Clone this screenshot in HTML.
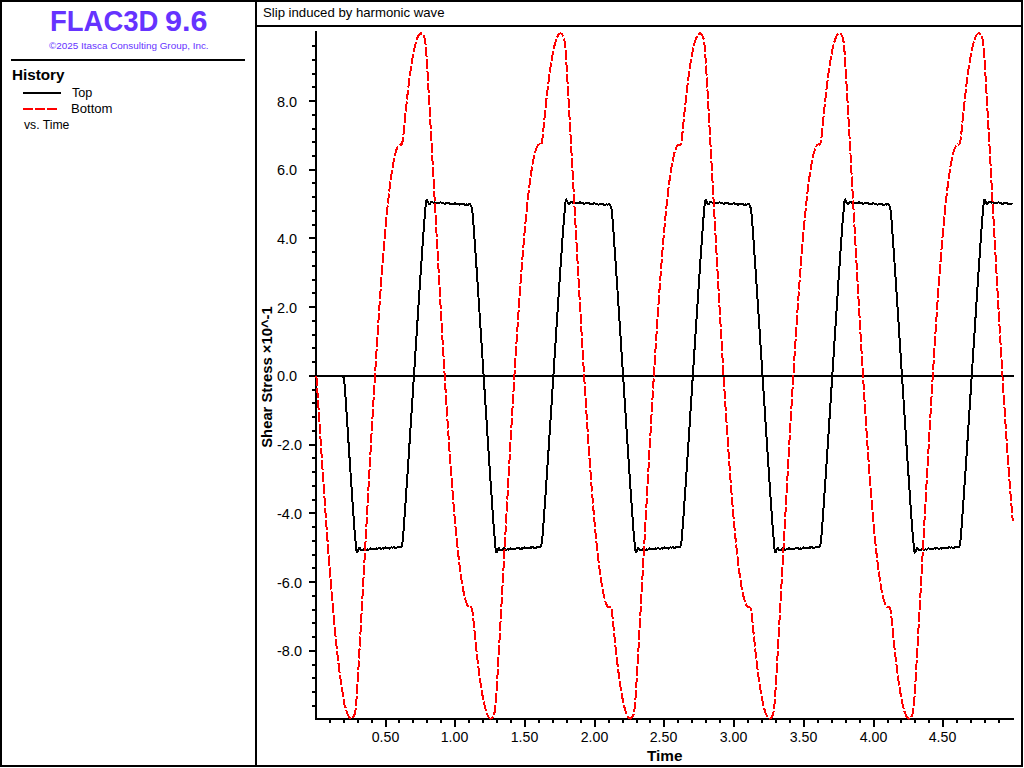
<!DOCTYPE html>
<html><head><meta charset="utf-8"><style>
html,body{margin:0;padding:0;background:#fff;width:1024px;height:768px;overflow:hidden}
svg{display:block;font-family:"Liberation Sans",sans-serif}
</style></head><body>
<svg width="1024" height="768" viewBox="0 0 1024 768">
<rect x="0" y="0" width="1024" height="768" fill="#fff"/>
<rect x="0" y="0" width="1023" height="2" fill="#000"/>
<rect x="0" y="765" width="1023" height="2" fill="#000"/>
<rect x="0" y="0" width="2" height="767" fill="#000"/>
<rect x="1021" y="0" width="2" height="767" fill="#000"/>
<rect x="255" y="0" width="2" height="767" fill="#000"/>
<rect x="257" y="25" width="764" height="2" fill="#000"/>
<rect x="11" y="59" width="234" height="2" fill="#000"/>
<rect x="23" y="92" width="38" height="2" fill="#000"/>
<rect x="23" y="108" width="10" height="2" fill="#f00"/>
<rect x="35" y="108" width="10" height="2" fill="#f00"/>
<rect x="47" y="108" width="10" height="2" fill="#f00"/>
<rect x="315" y="31" width="2" height="689" fill="#000"/>
<rect x="315" y="718" width="699" height="2" fill="#000"/>
<rect x="309" y="375" width="705" height="2" fill="#000"/>
<rect x="312" y="705" width="3" height="2" fill="#000"/>
<rect x="312" y="691" width="3" height="2" fill="#000"/>
<rect x="312" y="677" width="3" height="2" fill="#000"/>
<rect x="312" y="664" width="3" height="2" fill="#000"/>
<rect x="309" y="650" width="6" height="2" fill="#000"/>
<rect x="312" y="636" width="3" height="2" fill="#000"/>
<rect x="312" y="622" width="3" height="2" fill="#000"/>
<rect x="312" y="609" width="3" height="2" fill="#000"/>
<rect x="312" y="595" width="3" height="2" fill="#000"/>
<rect x="309" y="581" width="6" height="2" fill="#000"/>
<rect x="312" y="567" width="3" height="2" fill="#000"/>
<rect x="312" y="554" width="3" height="2" fill="#000"/>
<rect x="312" y="540" width="3" height="2" fill="#000"/>
<rect x="312" y="526" width="3" height="2" fill="#000"/>
<rect x="309" y="512" width="6" height="2" fill="#000"/>
<rect x="312" y="499" width="3" height="2" fill="#000"/>
<rect x="312" y="485" width="3" height="2" fill="#000"/>
<rect x="312" y="471" width="3" height="2" fill="#000"/>
<rect x="312" y="457" width="3" height="2" fill="#000"/>
<rect x="309" y="444" width="6" height="2" fill="#000"/>
<rect x="312" y="430" width="3" height="2" fill="#000"/>
<rect x="312" y="416" width="3" height="2" fill="#000"/>
<rect x="312" y="402" width="3" height="2" fill="#000"/>
<rect x="312" y="389" width="3" height="2" fill="#000"/>
<rect x="312" y="361" width="3" height="2" fill="#000"/>
<rect x="312" y="347" width="3" height="2" fill="#000"/>
<rect x="312" y="334" width="3" height="2" fill="#000"/>
<rect x="312" y="320" width="3" height="2" fill="#000"/>
<rect x="309" y="306" width="6" height="2" fill="#000"/>
<rect x="312" y="292" width="3" height="2" fill="#000"/>
<rect x="312" y="279" width="3" height="2" fill="#000"/>
<rect x="312" y="265" width="3" height="2" fill="#000"/>
<rect x="312" y="251" width="3" height="2" fill="#000"/>
<rect x="309" y="237" width="6" height="2" fill="#000"/>
<rect x="312" y="224" width="3" height="2" fill="#000"/>
<rect x="312" y="210" width="3" height="2" fill="#000"/>
<rect x="312" y="196" width="3" height="2" fill="#000"/>
<rect x="312" y="182" width="3" height="2" fill="#000"/>
<rect x="309" y="169" width="6" height="2" fill="#000"/>
<rect x="312" y="155" width="3" height="2" fill="#000"/>
<rect x="312" y="141" width="3" height="2" fill="#000"/>
<rect x="312" y="128" width="3" height="2" fill="#000"/>
<rect x="312" y="114" width="3" height="2" fill="#000"/>
<rect x="309" y="100" width="6" height="2" fill="#000"/>
<rect x="312" y="86" width="3" height="2" fill="#000"/>
<rect x="312" y="73" width="3" height="2" fill="#000"/>
<rect x="312" y="59" width="3" height="2" fill="#000"/>
<rect x="312" y="45" width="3" height="2" fill="#000"/>
<rect x="329" y="720" width="2" height="3" fill="#000"/>
<rect x="343" y="720" width="2" height="3" fill="#000"/>
<rect x="357" y="720" width="2" height="3" fill="#000"/>
<rect x="371" y="720" width="2" height="3" fill="#000"/>
<rect x="385" y="720" width="2" height="7" fill="#000"/>
<rect x="398" y="720" width="2" height="3" fill="#000"/>
<rect x="412" y="720" width="2" height="3" fill="#000"/>
<rect x="426" y="720" width="2" height="3" fill="#000"/>
<rect x="440" y="720" width="2" height="3" fill="#000"/>
<rect x="454" y="720" width="2" height="7" fill="#000"/>
<rect x="468" y="720" width="2" height="3" fill="#000"/>
<rect x="482" y="720" width="2" height="3" fill="#000"/>
<rect x="496" y="720" width="2" height="3" fill="#000"/>
<rect x="510" y="720" width="2" height="3" fill="#000"/>
<rect x="524" y="720" width="2" height="7" fill="#000"/>
<rect x="538" y="720" width="2" height="3" fill="#000"/>
<rect x="552" y="720" width="2" height="3" fill="#000"/>
<rect x="566" y="720" width="2" height="3" fill="#000"/>
<rect x="580" y="720" width="2" height="3" fill="#000"/>
<rect x="594" y="720" width="2" height="7" fill="#000"/>
<rect x="608" y="720" width="2" height="3" fill="#000"/>
<rect x="622" y="720" width="2" height="3" fill="#000"/>
<rect x="636" y="720" width="2" height="3" fill="#000"/>
<rect x="649" y="720" width="2" height="3" fill="#000"/>
<rect x="663" y="720" width="2" height="7" fill="#000"/>
<rect x="677" y="720" width="2" height="3" fill="#000"/>
<rect x="691" y="720" width="2" height="3" fill="#000"/>
<rect x="705" y="720" width="2" height="3" fill="#000"/>
<rect x="719" y="720" width="2" height="3" fill="#000"/>
<rect x="733" y="720" width="2" height="7" fill="#000"/>
<rect x="747" y="720" width="2" height="3" fill="#000"/>
<rect x="761" y="720" width="2" height="3" fill="#000"/>
<rect x="775" y="720" width="2" height="3" fill="#000"/>
<rect x="789" y="720" width="2" height="3" fill="#000"/>
<rect x="803" y="720" width="2" height="7" fill="#000"/>
<rect x="817" y="720" width="2" height="3" fill="#000"/>
<rect x="831" y="720" width="2" height="3" fill="#000"/>
<rect x="845" y="720" width="2" height="3" fill="#000"/>
<rect x="859" y="720" width="2" height="3" fill="#000"/>
<rect x="873" y="720" width="2" height="7" fill="#000"/>
<rect x="887" y="720" width="2" height="3" fill="#000"/>
<rect x="900" y="720" width="2" height="3" fill="#000"/>
<rect x="914" y="720" width="2" height="3" fill="#000"/>
<rect x="928" y="720" width="2" height="3" fill="#000"/>
<rect x="942" y="720" width="2" height="7" fill="#000"/>
<rect x="956" y="720" width="2" height="3" fill="#000"/>
<rect x="970" y="720" width="2" height="3" fill="#000"/>
<rect x="984" y="720" width="2" height="3" fill="#000"/>
<rect x="998" y="720" width="2" height="3" fill="#000"/>
<defs><clipPath id="pc"><rect x="315" y="31" width="700" height="688.5"/></clipPath></defs><g clip-path="url(#pc)">
<polyline fill="none" stroke="#000" stroke-width="2" shape-rendering="crispEdges" points="316.30,375.97 316.65,375.97 317.00,375.97 317.34,375.97 317.69,375.97 318.04,375.97 318.39,375.97 318.74,375.97 319.09,375.97 319.43,375.97 319.78,375.97 320.13,375.97 320.48,375.97 320.83,375.97 321.17,375.97 321.52,375.97 321.87,375.97 322.22,375.97 322.57,375.97 322.92,375.97 323.26,375.97 323.61,375.97 323.96,375.97 324.31,375.97 324.66,375.97 325.01,375.97 325.35,375.97 325.70,375.97 326.05,375.97 326.40,375.97 326.75,375.97 327.09,375.97 327.44,375.97 327.79,375.97 328.14,375.97 328.49,375.97 328.84,375.97 329.18,375.97 329.53,375.97 329.88,375.97 330.23,375.97 330.58,375.97 330.92,375.97 331.27,375.97 331.62,375.97 331.97,375.97 332.32,375.97 332.67,375.97 333.01,375.97 333.36,375.97 333.71,375.97 334.06,375.97 334.41,375.97 334.75,375.97 335.10,375.97 335.45,375.97 335.80,375.97 336.15,375.97 336.50,375.97 336.84,375.97 337.19,375.97 337.54,375.97 337.89,375.97 338.24,375.97 338.59,375.97 338.93,375.97 339.28,375.97 339.63,375.97 339.98,375.97 340.33,375.97 340.67,375.97 341.02,375.97 341.37,375.97 341.72,375.98 342.07,375.99 342.42,376.05 342.76,376.20 343.11,376.57 343.46,377.34 343.81,378.71 344.16,380.88 344.50,383.93 344.85,387.81 345.20,392.33 345.55,397.28 345.90,402.47 346.25,407.77 346.59,413.11 346.94,418.45 347.29,423.79 347.64,429.12 347.99,434.44 348.34,439.74 348.68,445.03 349.03,450.30 349.38,455.55 349.73,460.78 350.08,465.99 350.42,471.18 350.77,476.35 351.12,481.49 351.47,486.60 351.82,491.69 352.17,496.75 352.51,501.78 352.86,506.78 353.21,511.74 353.56,516.66 353.91,521.53 354.25,526.30 354.60,530.89 354.95,535.17 355.30,538.96 355.65,542.08 356.00,547.31 356.34,550.11 356.69,551.71 357.04,552.27 357.39,552.04 357.74,551.32 358.08,550.38 358.43,549.44 358.78,548.69 359.13,548.24 359.48,548.10 359.83,548.27 360.17,549.20 360.52,549.76 360.87,550.16 361.22,550.36 361.57,550.43 361.92,550.40 362.26,550.33 362.61,550.18 362.96,549.93 363.31,549.55 363.66,549.08 364.00,548.63 364.35,548.31 364.70,548.23 365.05,548.41 365.40,548.78 365.75,549.22 366.09,549.57 366.44,549.75 366.79,549.75 367.14,549.63 367.49,549.51 367.83,549.46 368.18,549.49 368.53,549.55 368.88,549.54 369.23,549.41 369.58,549.15 369.92,548.82 370.27,548.54 370.62,548.41 370.97,548.45 371.32,548.61 371.66,548.80 372.01,548.91 372.36,548.89 372.71,548.78 373.06,548.66 373.41,548.63 373.75,548.74 374.10,548.97 374.45,549.22 374.80,549.38 375.15,549.37 375.50,549.19 375.84,548.91 376.19,548.64 376.54,548.48 376.89,548.44 377.24,548.49 377.58,548.54 377.93,548.49 378.28,548.34 378.63,548.12 378.98,547.95 379.33,547.91 379.67,548.05 380.02,548.32 380.37,548.63 380.72,548.85 381.07,548.92 381.41,548.82 381.76,548.64 382.11,548.49 382.46,548.43 382.81,548.46 383.16,548.54 383.50,548.55 383.85,548.43 384.20,548.18 384.55,547.86 384.90,547.58 385.24,547.46 385.59,547.52 385.94,547.72 386.29,547.96 386.64,548.14 386.99,548.19 387.33,548.12 387.68,548.03 388.03,548.00 388.38,548.08 388.73,548.25 389.08,548.43 389.42,548.52 389.77,548.43 390.12,548.18 390.47,547.84 390.82,547.53 391.16,547.34 391.51,547.32 391.86,547.42 392.21,547.53 392.56,547.57 392.91,547.51 393.25,547.38 393.60,547.27 393.95,547.28 394.30,547.43 394.65,547.71 394.99,547.99 395.34,548.17 395.69,548.17 396.04,548.01 396.39,547.75 396.74,547.51 397.08,547.38 397.43,547.37 397.78,547.42 398.13,547.44 398.48,547.35 398.82,547.15 399.17,546.89 399.52,546.68 399.87,546.62 400.22,546.73 400.57,546.94 400.91,547.07 401.26,546.92 401.61,546.25 401.96,544.88 402.31,543.19 402.66,540.40 403.00,536.88 403.35,532.79 403.70,528.31 404.05,523.61 404.40,518.78 404.74,513.88 405.09,508.93 405.44,503.94 405.79,498.93 406.14,493.88 406.49,488.81 406.83,483.70 407.18,478.57 407.53,473.42 407.88,468.24 408.23,463.04 408.57,457.82 408.92,452.57 409.27,447.31 409.62,442.03 409.97,436.73 410.32,431.42 410.66,426.10 411.01,420.76 411.36,415.42 411.71,410.06 412.06,404.69 412.41,399.32 412.75,393.94 413.10,388.56 413.45,383.17 413.80,377.78 414.15,372.39 414.49,367.01 414.84,361.62 415.19,356.24 415.54,350.86 415.89,345.49 416.24,340.13 416.58,334.77 416.93,329.43 417.28,324.10 417.63,318.78 417.98,313.47 418.32,308.18 418.67,302.91 419.02,297.65 419.37,292.41 419.72,287.20 420.07,282.00 420.41,276.83 420.76,271.69 421.11,266.56 421.46,261.47 421.81,256.40 422.15,251.37 422.50,246.36 422.85,241.39 423.20,236.46 423.55,231.57 423.90,226.77 424.24,222.13 424.59,217.76 424.94,213.84 425.29,210.54 425.64,205.48 425.99,202.39 426.33,200.51 426.68,199.72 427.03,199.79 427.38,200.42 427.73,201.33 428.07,202.28 428.42,203.09 428.77,203.62 429.12,203.83 429.47,203.74 429.82,203.91 430.16,203.54 430.51,202.97 430.86,202.35 431.21,201.85 431.56,201.60 431.90,201.64 432.25,201.90 432.60,202.24 432.95,202.52 433.30,202.63 433.65,202.59 433.99,202.46 434.34,202.36 434.69,202.36 435.04,202.47 435.39,202.63 435.73,202.76 436.08,202.79 436.43,202.74 436.78,202.66 437.13,202.64 437.48,202.75 437.82,202.97 438.17,203.24 438.52,203.44 438.87,203.47 439.22,203.30 439.57,202.99 439.91,202.66 440.26,202.43 440.61,202.38 440.96,202.48 441.31,202.66 441.65,202.82 442.00,202.89 442.35,202.87 442.70,202.83 443.05,202.87 443.40,203.03 443.74,203.31 444.09,203.62 444.44,203.85 444.79,203.91 445.14,203.78 445.48,203.53 445.83,203.26 446.18,203.09 446.53,203.06 446.88,203.13 447.23,203.24 447.57,203.27 447.92,203.20 448.27,203.05 448.62,202.90 448.97,202.87 449.31,203.01 449.66,203.30 450.01,203.65 450.36,203.93 450.71,204.07 451.06,204.04 451.40,203.91 451.75,203.78 452.10,203.74 452.45,203.80 452.80,203.92 453.15,204.00 453.49,203.96 453.84,203.78 454.19,203.51 454.54,203.25 454.89,203.12 455.23,203.18 455.58,203.40 455.93,203.68 456.28,203.92 456.63,204.04 456.98,204.04 457.32,203.98 457.67,203.97 458.02,204.06 458.37,204.26 458.72,204.50 459.06,204.66 459.41,204.65 459.76,204.48 460.11,204.19 460.46,203.90 460.81,203.72 461.15,203.70 461.50,203.82 461.85,203.98 462.20,204.09 462.55,204.09 462.89,204.01 463.24,203.93 463.59,203.94 463.94,204.10 464.29,204.40 464.64,204.73 464.98,204.98 465.33,205.07 465.68,204.98 466.03,204.78 466.38,204.57 466.73,204.45 467.07,204.45 467.42,204.53 467.77,204.61 468.12,204.59 468.47,204.46 468.81,204.25 469.16,204.06 469.51,204.01 469.86,204.14 470.21,204.47 470.56,204.93 470.90,205.50 471.25,206.26 471.60,207.39 471.95,209.12 472.30,210.80 472.64,214.16 472.99,218.13 473.34,222.53 473.69,227.19 474.04,231.99 474.39,236.88 474.73,241.82 475.08,246.80 475.43,251.80 475.78,256.84 476.13,261.91 476.48,267.01 476.82,272.13 477.17,277.28 477.52,282.45 477.87,287.65 478.22,292.87 478.56,298.11 478.91,303.36 479.26,308.64 479.61,313.93 479.96,319.24 480.31,324.56 480.65,329.89 481.00,335.24 481.35,340.59 481.70,345.96 482.05,351.33 482.39,356.71 482.74,362.09 483.09,367.47 483.44,372.86 483.79,378.25 484.14,383.64 484.48,389.02 484.83,394.41 485.18,399.79 485.53,405.16 485.88,410.52 486.22,415.88 486.57,421.23 486.92,426.56 487.27,431.89 487.62,437.20 487.97,442.49 488.31,447.77 488.66,453.03 489.01,458.27 489.36,463.49 489.71,468.69 490.06,473.87 490.40,479.02 490.75,484.15 491.10,489.25 491.45,494.32 491.80,499.37 492.14,504.38 492.49,509.36 492.84,514.30 493.19,519.20 493.54,524.02 493.89,528.71 494.23,533.16 494.58,537.21 494.93,540.67 495.28,545.54 495.63,548.92 495.97,551.08 496.32,552.12 496.67,552.23 497.02,551.71 497.37,550.84 497.72,549.88 498.06,549.02 498.41,548.42 498.76,548.13 499.11,548.16 499.46,548.90 499.80,549.51 500.15,549.99 500.50,550.28 500.85,550.41 501.20,550.42 501.55,550.37 501.89,550.26 502.24,550.07 502.59,549.75 502.94,549.31 503.29,548.84 503.64,548.44 503.98,548.23 504.33,548.29 504.68,548.59 505.03,549.01 505.38,549.42 505.72,549.69 506.07,549.77 506.42,549.69 506.77,549.56 507.12,549.47 507.47,549.46 507.81,549.52 508.16,549.56 508.51,549.49 508.86,549.29 509.21,548.98 509.55,548.66 509.90,548.45 510.25,548.41 510.60,548.52 510.95,548.71 511.30,548.87 511.64,548.91 511.99,548.84 512.34,548.71 512.69,548.63 513.04,548.67 513.38,548.85 513.73,549.11 514.08,549.32 514.43,549.40 514.78,549.30 515.13,549.05 515.47,548.76 515.82,548.54 516.17,548.44 516.52,548.47 516.87,548.52 517.22,548.53 517.56,548.42 517.91,548.23 518.26,548.02 518.61,547.91 518.96,547.96 519.30,548.18 519.65,548.49 520.00,548.76 520.35,548.91 520.70,548.88 521.05,548.73 521.39,548.55 521.74,548.44 522.09,548.44 522.44,548.50 522.79,548.56 523.13,548.51 523.48,548.32 523.83,548.01 524.18,547.70 524.53,547.50 524.88,547.47 525.22,547.61 525.57,547.85 525.92,548.07 526.27,548.18 526.62,548.16 526.97,548.07 527.31,548.00 527.66,548.02 528.01,548.16 528.36,548.35 528.71,548.50 529.05,548.50 529.40,548.32 529.75,548.00 530.10,547.66 530.45,547.41 530.80,547.31 531.14,547.36 531.49,547.48 531.84,547.57 532.19,547.55 532.54,547.45 532.88,547.31 533.23,547.25 533.58,547.34 533.93,547.57 534.28,547.86 534.63,548.10 534.97,548.19 535.32,548.10 535.67,547.88 536.02,547.62 536.37,547.43 536.71,547.36 537.06,547.39 537.41,547.44 537.76,547.41 538.11,547.26 538.46,547.01 538.80,546.77 539.15,546.63 539.50,546.66 539.85,546.83 540.20,547.03 540.55,547.05 540.89,546.65 541.24,545.63 541.59,543.86 541.94,541.84 542.29,538.65 542.63,534.81 542.98,530.50 543.33,525.89 543.68,521.11 544.03,516.24 544.38,511.31 544.72,506.34 545.07,501.34 545.42,496.31 545.77,491.25 546.12,486.16 546.46,481.04 546.81,475.90 547.16,470.73 547.51,465.54 547.86,460.33 548.21,455.09 548.55,449.84 548.90,444.57 549.25,439.28 549.60,433.98 549.95,428.66 550.29,423.33 550.64,417.99 550.99,412.63 551.34,407.27 551.69,401.90 552.04,396.53 552.38,391.14 552.73,385.76 553.08,380.37 553.43,374.98 553.78,369.60 554.13,364.21 554.47,358.83 554.82,353.45 555.17,348.07 555.52,342.70 555.87,337.35 556.21,332.00 556.56,326.66 556.91,321.33 557.26,316.02 557.61,310.72 557.96,305.44 558.30,300.17 558.65,294.93 559.00,289.70 559.35,284.50 559.70,279.31 560.04,274.16 560.39,269.02 560.74,263.91 561.09,258.83 561.44,253.78 561.79,248.76 562.13,243.77 562.48,238.82 562.83,233.91 563.18,229.07 563.53,224.34 563.87,219.82 564.22,215.66 564.57,212.04 564.92,209.12 565.27,203.73 565.62,201.27 565.96,199.98 566.31,199.67 566.66,200.06 567.01,200.87 567.36,201.83 567.71,202.73 568.05,203.41 568.40,203.77 568.75,203.82 569.10,203.58 569.45,203.75 569.79,203.26 570.14,202.64 570.49,202.06 570.84,201.68 571.19,201.59 571.54,201.76 571.88,202.08 572.23,202.40 572.58,202.60 572.93,202.62 573.28,202.53 573.62,202.40 573.97,202.35 574.32,202.40 574.67,202.55 575.02,202.70 575.37,202.79 575.71,202.77 576.06,202.69 576.41,202.63 576.76,202.68 577.11,202.85 577.45,203.12 577.80,203.36 578.15,203.48 578.50,203.40 578.85,203.15 579.20,202.81 579.54,202.52 579.89,202.38 580.24,202.42 580.59,202.57 580.94,202.75 581.29,202.87 581.63,202.88 581.98,202.84 582.33,202.83 582.68,202.93 583.03,203.16 583.37,203.47 583.72,203.76 584.07,203.91 584.42,203.86 584.77,203.66 585.12,203.38 585.46,203.15 585.81,203.05 586.16,203.09 586.51,203.19 586.86,203.27 587.20,203.25 587.55,203.12 587.90,202.96 588.25,202.87 588.60,202.92 588.95,203.15 589.29,203.48 589.64,203.81 589.99,204.03 590.34,204.07 590.69,203.98 591.04,203.84 591.38,203.74 591.73,203.76 592.08,203.86 592.43,203.97 592.78,204.00 593.12,203.89 593.47,203.65 593.82,203.37 594.17,203.17 594.52,203.13 594.87,203.28 595.21,203.54 595.56,203.81 595.91,204.00 596.26,204.05 596.61,204.01 596.95,203.96 597.30,204.00 597.65,204.16 598.00,204.39 598.35,204.60 598.70,204.68 599.04,204.58 599.39,204.33 599.74,204.03 600.09,203.79 600.44,203.69 600.78,203.75 601.13,203.90 601.48,204.05 601.83,204.10 602.18,204.05 602.53,203.96 602.87,203.92 603.22,204.00 603.57,204.24 603.92,204.57 604.27,204.88 604.62,205.05 604.96,205.05 605.31,204.89 605.66,204.66 606.01,204.49 606.36,204.43 606.70,204.49 607.05,204.58 607.40,204.62 607.75,204.54 608.10,204.35 608.45,204.14 608.79,204.01 609.14,204.05 609.49,204.29 609.84,204.69 610.19,205.21 610.53,205.86 610.88,206.78 611.23,208.20 611.58,209.45 611.93,212.46 612.28,216.15 612.62,220.37 612.97,224.92 613.32,229.67 613.67,234.53 614.02,239.44 614.36,244.40 614.71,249.39 615.06,254.42 615.41,259.47 615.76,264.56 616.11,269.67 616.45,274.80 616.80,279.96 617.15,285.15 617.50,290.36 617.85,295.59 618.20,300.83 618.54,306.10 618.89,311.39 619.24,316.69 619.59,322.00 619.94,327.33 620.28,332.67 620.63,338.02 620.98,343.38 621.33,348.75 621.68,354.12 622.03,359.50 622.37,364.89 622.72,370.27 623.07,375.66 623.42,381.05 623.77,386.44 624.11,391.82 624.46,397.20 624.81,402.58 625.16,407.95 625.51,413.31 625.86,418.66 626.20,424.00 626.55,429.33 626.90,434.65 627.25,439.95 627.60,445.23 627.94,450.50 628.29,455.75 628.64,460.98 628.99,466.19 629.34,471.38 629.69,476.55 630.03,481.69 630.38,486.80 630.73,491.89 631.08,496.94 631.43,501.97 631.78,506.97 632.12,511.93 632.47,516.85 632.82,521.72 633.17,526.48 633.52,531.06 633.86,535.33 634.21,539.09 634.56,542.18 634.91,547.44 635.26,550.19 635.61,551.75 635.95,552.27 636.30,552.02 636.65,551.29 637.00,550.34 637.35,549.41 637.69,548.67 638.04,548.22 638.39,548.10 638.74,548.28 639.09,549.22 639.44,549.78 639.78,550.17 640.13,550.37 640.48,550.43 640.83,550.40 641.18,550.32 641.53,550.17 641.87,549.92 642.22,549.53 642.57,549.07 642.92,548.61 643.27,548.30 643.61,548.23 643.96,548.42 644.31,548.80 644.66,549.24 645.01,549.59 645.36,549.76 645.70,549.74 646.05,549.62 646.40,549.50 646.75,549.45 647.10,549.49 647.44,549.55 647.79,549.54 648.14,549.40 648.49,549.13 648.84,548.81 649.19,548.53 649.53,548.41 649.88,548.45 650.23,548.62 650.58,548.80 650.93,548.91 651.27,548.89 651.62,548.78 651.97,548.66 652.32,548.63 652.67,548.75 653.02,548.98 653.36,549.23 653.71,549.39 654.06,549.37 654.41,549.18 654.76,548.90 655.11,548.63 655.45,548.47 655.80,548.44 656.15,548.50 656.50,548.54 656.85,548.49 657.19,548.33 657.54,548.11 657.89,547.94 658.24,547.91 658.59,548.06 658.94,548.34 659.28,548.64 659.63,548.86 659.98,548.92 660.33,548.82 660.68,548.64 661.02,548.48 661.37,548.43 661.72,548.47 662.07,548.54 662.42,548.55 662.77,548.43 663.11,548.17 663.46,547.85 663.81,547.58 664.16,547.46 664.51,547.52 664.85,547.73 665.20,547.97 665.55,548.14 665.90,548.19 666.25,548.12 666.60,548.03 666.94,548.00 667.29,548.08 667.64,548.26 667.99,548.44 668.34,548.52 668.69,548.42 669.03,548.17 669.38,547.82 669.73,547.52 670.08,547.34 670.43,547.33 670.77,547.42 671.12,547.54 671.47,547.57 671.82,547.51 672.17,547.37 672.52,547.27 672.86,547.28 673.21,547.44 673.56,547.72 673.91,548.00 674.26,548.17 674.60,548.17 674.95,548.00 675.30,547.74 675.65,547.51 676.00,547.38 676.35,547.37 676.69,547.42 677.04,547.43 677.39,547.34 677.74,547.14 678.09,546.88 678.43,546.68 678.78,546.62 679.13,546.74 679.48,546.94 679.83,547.07 680.18,546.91 680.52,546.21 680.87,544.81 681.22,543.10 681.57,540.27 681.92,536.73 682.27,532.62 682.61,528.13 682.96,523.42 683.31,518.59 683.66,513.68 684.01,508.73 684.35,503.75 684.70,498.73 685.05,493.68 685.40,488.61 685.75,483.50 686.10,478.37 686.44,473.22 686.79,468.04 687.14,462.84 687.49,457.61 687.84,452.37 688.18,447.11 688.53,441.83 688.88,436.53 689.23,431.22 689.58,425.89 689.93,420.56 690.27,415.21 690.62,409.85 690.97,404.48 691.32,399.11 691.67,393.73 692.01,388.35 692.36,382.96 692.71,377.57 693.06,372.18 693.41,366.80 693.76,361.41 694.10,356.03 694.45,350.65 694.80,345.28 695.15,339.92 695.50,334.57 695.85,329.22 696.19,323.89 696.54,318.57 696.89,313.26 697.24,307.97 697.59,302.70 697.93,297.45 698.28,292.21 698.63,287.00 698.98,281.80 699.33,276.63 699.68,271.49 700.02,266.37 700.37,261.27 700.72,256.21 701.07,251.17 701.42,246.17 701.76,241.20 702.11,236.26 702.46,231.38 702.81,226.59 703.16,221.95 703.51,217.60 703.85,213.70 704.20,210.43 704.55,205.34 704.90,202.30 705.25,200.46 705.60,199.71 705.94,199.80 706.29,200.45 706.64,201.37 706.99,202.32 707.34,203.12 707.68,203.64 708.03,203.84 708.38,203.73 708.73,203.90 709.08,203.52 709.43,202.95 709.77,202.32 710.12,201.83 710.47,201.60 710.82,201.65 711.17,201.92 711.51,202.26 711.86,202.52 712.21,202.63 712.56,202.58 712.91,202.46 713.26,202.36 713.60,202.36 713.95,202.47 714.30,202.63 714.65,202.76 715.00,202.79 715.34,202.73 715.69,202.65 716.04,202.64 716.39,202.75 716.74,202.98 717.09,203.25 717.43,203.45 717.78,203.46 718.13,203.29 718.48,202.97 718.83,202.65 719.18,202.43 719.52,202.38 719.87,202.49 720.22,202.67 720.57,202.82 720.92,202.89 721.26,202.87 721.61,202.83 721.96,202.87 722.31,203.04 722.66,203.32 723.01,203.63 723.35,203.86 723.70,203.91 724.05,203.77 724.40,203.52 724.75,203.25 725.09,203.08 725.44,203.06 725.79,203.14 726.14,203.24 726.49,203.27 726.84,203.19 727.18,203.04 727.53,202.90 727.88,202.88 728.23,203.02 728.58,203.32 728.92,203.66 729.27,203.94 729.62,204.07 729.97,204.04 730.32,203.91 730.67,203.78 731.01,203.74 731.36,203.80 731.71,203.92 732.06,204.00 732.41,203.96 732.76,203.77 733.10,203.50 733.45,203.25 733.80,203.12 734.15,203.19 734.50,203.41 734.84,203.69 735.19,203.92 735.54,204.04 735.89,204.03 736.24,203.98 736.59,203.97 736.93,204.07 737.28,204.27 737.63,204.51 737.98,204.66 738.33,204.65 738.67,204.47 739.02,204.18 739.37,203.89 739.72,203.72 740.07,203.71 740.42,203.83 740.76,203.98 741.11,204.09 741.46,204.09 741.81,204.00 742.16,203.92 742.50,203.94 742.85,204.11 743.20,204.41 743.55,204.74 743.90,204.99 744.25,205.07 744.59,204.98 744.94,204.77 745.29,204.56 745.64,204.45 745.99,204.45 746.34,204.54 746.68,204.61 747.03,204.59 747.38,204.45 747.73,204.24 748.08,204.05 748.42,204.01 748.77,204.15 749.12,204.48 749.47,204.95 749.82,205.53 750.17,206.30 750.51,207.44 750.86,209.21 751.21,210.92 751.56,214.30 751.91,218.29 752.25,222.70 752.60,227.37 752.95,232.18 753.30,237.07 753.65,242.01 754.00,246.99 754.34,252.00 754.69,257.04 755.04,262.11 755.39,267.21 755.74,272.33 756.08,277.48 756.43,282.66 756.78,287.85 757.13,293.07 757.48,298.31 757.83,303.57 758.17,308.84 758.52,314.14 758.87,319.44 759.22,324.77 759.57,330.10 759.92,335.45 760.26,340.80 760.61,346.17 760.96,351.54 761.31,356.92 761.66,362.30 762.00,367.68 762.35,373.07 762.70,378.46 763.05,383.85 763.40,389.23 763.75,394.62 764.09,399.99 764.44,405.37 764.79,410.73 765.14,416.09 765.49,421.43 765.83,426.77 766.18,432.09 766.53,437.40 766.88,442.70 767.23,447.97 767.58,453.23 767.92,458.47 768.27,463.69 768.62,468.89 768.97,474.07 769.32,479.22 769.67,484.35 770.01,489.45 770.36,494.52 770.71,499.56 771.06,504.57 771.41,509.55 771.75,514.49 772.10,519.39 772.45,524.21 772.80,528.89 773.15,533.33 773.50,537.36 773.84,540.79 774.19,545.70 774.54,549.02 774.89,551.14 775.24,552.14 775.58,552.22 775.93,551.68 776.28,550.80 776.63,549.84 776.98,548.99 777.33,548.40 777.67,548.12 778.02,548.16 778.37,548.93 778.72,549.53 779.07,550.01 779.41,550.29 779.76,550.41 780.11,550.42 780.46,550.37 780.81,550.26 781.16,550.06 781.50,549.73 781.85,549.30 782.20,548.82 782.55,548.43 782.90,548.23 783.25,548.30 783.59,548.60 783.94,549.03 784.29,549.44 784.64,549.70 784.99,549.77 785.33,549.69 785.68,549.56 786.03,549.47 786.38,549.46 786.73,549.52 787.08,549.56 787.42,549.49 787.77,549.28 788.12,548.96 788.47,548.65 788.82,548.45 789.16,548.41 789.51,548.53 789.86,548.72 790.21,548.87 790.56,548.91 790.91,548.84 791.25,548.71 791.60,548.63 791.95,548.68 792.30,548.86 792.65,549.12 792.99,549.33 793.34,549.40 793.69,549.29 794.04,549.04 794.39,548.75 794.74,548.53 795.08,548.44 795.43,548.47 795.78,548.53 796.13,548.53 796.48,548.42 796.83,548.22 797.17,548.01 797.52,547.90 797.87,547.97 798.22,548.19 798.57,548.50 798.91,548.77 799.26,548.91 799.61,548.88 799.96,548.73 800.31,548.55 800.66,548.44 801.00,548.44 801.35,548.51 801.70,548.56 802.05,548.50 802.40,548.31 802.74,548.00 803.09,547.69 803.44,547.49 803.79,547.47 804.14,547.62 804.49,547.86 804.83,548.07 805.18,548.18 805.53,548.16 805.88,548.07 806.23,548.00 806.57,548.03 806.92,548.17 807.27,548.36 807.62,548.50 807.97,548.49 808.32,548.31 808.66,547.99 809.01,547.65 809.36,547.40 809.71,547.31 810.06,547.37 810.41,547.49 810.75,547.57 811.10,547.55 811.45,547.44 811.80,547.31 812.15,547.26 812.49,547.35 812.84,547.58 813.19,547.87 813.54,548.11 813.89,548.19 814.24,548.10 814.58,547.87 814.93,547.61 815.28,547.42 815.63,547.36 815.98,547.39 816.32,547.44 816.67,547.40 817.02,547.25 817.37,547.00 817.72,546.76 818.07,546.63 818.41,546.66 818.76,546.84 819.11,547.03 819.46,547.04 819.81,546.62 820.16,545.58 820.50,543.77 820.85,541.73 821.20,538.51 821.55,534.65 821.90,530.33 822.24,525.71 822.59,520.92 822.94,516.05 823.29,511.12 823.64,506.15 823.99,501.15 824.33,496.11 824.68,491.05 825.03,485.96 825.38,480.84 825.73,475.70 826.07,470.53 826.42,465.34 826.77,460.13 827.12,454.89 827.47,449.64 827.82,444.36 828.16,439.08 828.51,433.77 828.86,428.45 829.21,423.12 829.56,417.78 829.90,412.43 830.25,407.06 830.60,401.69 830.95,396.32 831.30,390.94 831.65,385.55 831.99,380.16 832.34,374.77 832.69,369.39 833.04,364.00 833.39,358.62 833.74,353.24 834.08,347.86 834.43,342.50 834.78,337.14 835.13,331.79 835.48,326.45 835.82,321.13 836.17,315.81 836.52,310.52 836.87,305.23 837.22,299.97 837.57,294.72 837.91,289.50 838.26,284.29 838.61,279.11 838.96,273.96 839.31,268.82 839.65,263.72 840.00,258.64 840.35,253.59 840.70,248.57 841.05,243.58 841.40,238.63 841.74,233.72 842.09,228.88 842.44,224.16 842.79,219.65 843.14,215.50 843.48,211.91 843.83,209.03 844.18,203.61 844.53,201.20 844.88,199.95 845.23,199.67 845.57,200.09 845.92,200.91 846.27,201.87 846.62,202.76 846.97,203.43 847.32,203.78 847.66,203.81 848.01,203.57 848.36,203.74 848.71,203.24 849.06,202.62 849.40,202.04 849.75,201.67 850.10,201.59 850.45,201.77 850.80,202.09 851.15,202.41 851.49,202.60 851.84,202.62 852.19,202.52 852.54,202.40 852.89,202.35 853.23,202.41 853.58,202.56 853.93,202.71 854.28,202.79 854.63,202.77 854.98,202.69 855.32,202.63 855.67,202.68 856.02,202.86 856.37,203.13 856.72,203.37 857.06,203.48 857.41,203.39 857.76,203.13 858.11,202.80 858.46,202.51 858.81,202.38 859.15,202.42 859.50,202.58 859.85,202.76 860.20,202.87 860.55,202.88 860.90,202.84 861.24,202.84 861.59,202.94 861.94,203.18 862.29,203.49 862.64,203.77 862.98,203.91 863.33,203.86 863.68,203.65 864.03,203.37 864.38,203.15 864.73,203.05 865.07,203.09 865.42,203.20 865.77,203.27 866.12,203.24 866.47,203.12 866.81,202.96 867.16,202.87 867.51,202.93 867.86,203.16 868.21,203.50 868.56,203.82 868.90,204.03 869.25,204.07 869.60,203.98 869.95,203.83 870.30,203.74 870.64,203.76 870.99,203.86 871.34,203.97 871.69,204.00 872.04,203.88 872.39,203.63 872.73,203.36 873.08,203.16 873.43,203.13 873.78,203.29 874.13,203.55 874.48,203.82 874.82,204.00 875.17,204.05 875.52,204.01 875.87,203.96 876.22,204.01 876.56,204.17 876.91,204.40 877.26,204.60 877.61,204.68 877.96,204.57 878.31,204.32 878.65,204.02 879.00,203.78 879.35,203.69 879.70,203.76 880.05,203.91 880.39,204.05 880.74,204.10 881.09,204.05 881.44,203.96 881.79,203.92 882.14,204.01 882.48,204.25 882.83,204.58 883.18,204.89 883.53,205.06 883.88,205.04 884.23,204.88 884.57,204.66 884.92,204.49 885.27,204.44 885.62,204.49 885.97,204.58 886.31,204.62 886.66,204.53 887.01,204.34 887.36,204.13 887.71,204.01 888.06,204.06 888.40,204.30 888.75,204.71 889.10,205.23 889.45,205.89 889.80,206.83 890.14,208.27 890.49,209.55 890.84,212.59 891.19,216.31 891.54,220.54 891.89,225.10 892.23,229.86 892.58,234.72 892.93,239.63 893.28,244.59 893.63,249.59 893.97,254.61 894.32,259.67 894.67,264.75 895.02,269.86 895.37,275.00 895.72,280.17 896.06,285.35 896.41,290.56 896.76,295.79 897.11,301.04 897.46,306.31 897.81,311.59 898.15,316.89 898.50,322.21 898.85,327.54 899.20,332.88 899.55,338.23 899.89,343.59 900.24,348.96 900.59,354.33 900.94,359.71 901.29,365.10 901.64,370.48 901.98,375.87 902.33,381.26 902.68,386.65 903.03,392.03 903.38,397.41 903.72,402.79 904.07,408.15 904.42,413.52 904.77,418.87 905.12,424.21 905.47,429.54 905.81,434.85 906.16,440.15 906.51,445.44 906.86,450.71 907.21,455.96 907.55,461.19 907.90,466.40 908.25,471.58 908.60,476.75 908.95,481.89 909.30,487.00 909.64,492.08 909.99,497.14 910.34,502.17 910.69,507.16 911.04,512.12 911.39,517.04 911.73,521.90 912.08,526.66 912.43,531.24 912.78,535.48 913.13,539.23 913.47,542.29 913.82,547.57 914.17,550.27 914.52,551.79 914.87,552.28 915.22,552.00 915.56,551.25 915.91,550.30 916.26,549.38 916.61,548.65 916.96,548.21 917.30,548.11 917.65,548.29 918.00,549.25 918.35,549.80 918.70,550.18 919.05,550.37 919.39,550.43 919.74,550.40 920.09,550.32 920.44,550.17 920.79,549.90 921.13,549.52 921.48,549.05 921.83,548.60 922.18,548.29 922.53,548.23 922.88,548.43 923.22,548.82 923.57,549.25 923.92,549.60 924.27,549.76 924.62,549.74 924.97,549.62 925.31,549.50 925.66,549.45 926.01,549.49 926.36,549.55 926.71,549.54 927.05,549.39 927.40,549.12 927.75,548.80 928.10,548.53 928.45,548.41 928.80,548.46 929.14,548.63 929.49,548.81 929.84,548.91 930.19,548.89 930.54,548.77 930.88,548.65 931.23,548.64 931.58,548.76 931.93,548.99 932.28,549.24 932.63,549.39 932.97,549.36 933.32,549.17 933.67,548.89 934.02,548.62 934.37,548.47 934.72,548.45 935.06,548.50 935.41,548.54 935.76,548.49 936.11,548.32 936.46,548.11 936.80,547.94 937.15,547.91 937.50,548.07 937.85,548.35 938.20,548.65 938.55,548.87 938.89,548.91 939.24,548.81 939.59,548.63 939.94,548.48 940.29,548.43 940.63,548.47 940.98,548.54 941.33,548.55 941.68,548.42 942.03,548.16 942.38,547.83 942.72,547.57 943.07,547.46 943.42,547.53 943.77,547.74 944.12,547.98 944.46,548.15 944.81,548.18 945.16,548.12 945.51,548.02 945.86,548.00 946.21,548.09 946.55,548.27 946.90,548.44 947.25,548.52 947.60,548.42 947.95,548.15 948.30,547.81 948.64,547.51 948.99,547.34 949.34,547.33 949.69,547.43 950.04,547.54 950.38,547.57 950.73,547.50 951.08,547.37 951.43,547.27 951.78,547.28 952.13,547.45 952.47,547.73 952.82,548.01 953.17,548.18 953.52,548.17 953.87,547.99 954.21,547.73 954.56,547.50 954.91,547.37 955.26,547.37 955.61,547.42 955.96,547.43 956.30,547.34 956.65,547.13 957.00,546.87 957.35,546.67 957.70,546.62 958.04,546.74 958.39,546.95 958.74,547.08 959.09,546.89 959.44,546.17 959.79,544.74 960.13,543.01 960.48,540.15 960.83,536.58 961.18,532.45 961.53,527.95 961.88,523.24 962.22,518.40 962.57,513.49 962.92,508.54 963.27,503.56 963.62,498.54 963.96,493.49 964.31,488.41 964.66,483.31 965.01,478.17 965.36,473.02 965.71,467.84 966.05,462.63 966.40,457.41 966.75,452.16 967.10,446.90 967.45,441.62 967.79,436.32 968.14,431.01 968.49,425.69 968.84,420.35 969.19,415.00 969.54,409.64 969.88,404.27 970.23,398.90 970.58,393.52 970.93,388.14 971.28,382.75 971.62,377.36 971.97,371.98 972.32,366.59 972.67,361.20 973.02,355.82 973.37,350.45 973.71,345.07 974.06,339.71 974.41,334.36 974.76,329.01 975.11,323.68 975.46,318.36 975.80,313.06 976.15,307.77 976.50,302.50 976.85,297.24 977.20,292.01 977.54,286.79 977.89,281.60 978.24,276.43 978.59,271.29 978.94,266.17 979.29,261.08 979.63,256.01 979.98,250.98 980.33,245.97 980.68,241.00 981.03,236.07 981.37,231.20 981.72,226.41 982.07,221.78 982.42,217.44 982.77,213.56 983.12,210.32 983.46,205.20 983.81,202.21 984.16,200.41 984.51,199.70 984.86,199.82 985.20,200.48 985.55,201.41 985.90,202.35 986.25,203.14 986.60,203.65 986.95,203.84 987.29,203.72 987.64,203.89 987.99,203.50 988.34,202.92 988.69,202.30 989.04,201.82 989.38,201.59 989.73,201.66 990.08,201.93 990.43,202.27 990.78,202.53 991.12,202.63 991.47,202.58 991.82,202.45 992.17,202.36 992.52,202.36 992.87,202.48 993.21,202.64 993.56,202.76 993.91,202.79 994.26,202.73 994.61,202.65 994.95,202.64 995.30,202.76 995.65,202.99 996.00,203.26 996.35,203.45 996.70,203.46 997.04,203.28 997.39,202.96 997.74,202.64 998.09,202.42 998.44,202.38 998.79,202.49 999.13,202.68 999.48,202.83 999.83,202.89 1000.18,202.86 1000.53,202.83 1000.87,202.87 1001.22,203.05 1001.57,203.33 1001.92,203.64 1002.27,203.86 1002.62,203.91 1002.96,203.76 1003.31,203.50 1003.66,203.24 1004.01,203.08 1004.36,203.06 1004.70,203.14 1005.05,203.24 1005.40,203.27 1005.75,203.19 1006.10,203.03 1006.45,202.90 1006.79,202.88 1007.14,203.03 1007.49,203.33 1007.84,203.67 1008.19,203.95 1008.53,204.07 1008.88,204.03 1009.23,203.90 1009.58,203.77 1009.93,203.74 1010.28,203.81 1010.62,203.93 1010.97,204.00 1011.32,203.95 1011.67,203.76 1012.02,203.49 1012.37,203.24 1012.71,203.12"/>
<polyline fill="none" stroke="#f00" stroke-width="2" stroke-dasharray="10 2" shape-rendering="crispEdges" points="316.40,375.97 316.75,381.35 317.10,386.72 317.44,392.09 317.79,397.46 318.14,402.82 318.49,408.18 318.84,413.53 319.19,418.87 319.53,424.19 319.88,429.51 320.23,434.81 320.58,440.10 320.93,445.38 321.27,450.63 321.62,455.87 321.97,461.09 322.32,466.29 322.67,471.46 323.02,476.61 323.36,481.74 323.71,486.84 324.06,491.91 324.41,496.96 324.76,501.97 325.11,506.95 325.45,511.91 325.80,516.82 326.15,521.71 326.50,526.56 326.85,531.37 327.19,536.14 327.54,540.87 327.89,545.56 328.24,550.21 328.59,554.82 328.94,559.38 329.28,563.90 329.63,568.38 329.98,572.80 330.33,577.18 330.68,581.50 331.02,585.78 331.37,590.00 331.72,594.18 332.07,598.29 332.42,602.36 332.77,606.37 333.11,610.32 333.46,614.21 333.81,618.05 334.16,621.82 334.51,625.53 334.85,629.19 335.20,632.78 335.55,636.31 335.90,639.77 336.25,643.17 336.60,646.50 336.94,649.77 337.29,652.97 337.64,656.10 337.99,659.16 338.34,662.15 338.69,665.07 339.03,667.92 339.38,670.70 339.73,673.41 340.08,676.04 340.43,678.60 340.77,681.08 341.12,683.49 341.47,685.83 341.82,688.09 342.17,690.27 342.52,692.37 342.86,694.39 343.21,696.34 343.56,698.21 343.91,700.00 344.26,701.71 344.60,706.42 344.95,706.45 345.30,707.05 345.65,708.01 346.00,709.12 346.35,710.27 346.69,711.39 347.04,712.43 347.39,713.40 347.74,714.29 348.09,715.10 348.44,715.82 348.78,716.45 349.13,717.01 349.48,717.48 349.83,717.86 350.18,718.16 350.52,718.38 350.87,718.51 351.22,718.56 351.57,718.53 351.92,718.41 352.27,718.20 352.61,717.92 352.96,717.54 353.31,717.08 353.66,716.53 354.01,715.88 354.35,715.08 354.70,714.05 355.05,712.67 355.40,710.75 355.75,708.13 356.10,704.70 356.44,700.47 356.79,695.56 357.14,690.17 357.49,684.47 357.84,678.60 358.18,672.64 358.53,666.63 358.88,660.58 359.23,654.50 359.58,648.40 359.93,642.27 360.27,636.11 360.62,629.94 360.97,623.74 361.32,617.53 361.67,611.30 362.02,605.05 362.36,598.79 362.71,592.51 363.06,586.23 363.41,579.93 363.76,573.63 364.10,567.32 364.45,561.00 364.80,554.69 365.15,548.37 365.50,542.05 365.85,535.73 366.19,529.41 366.54,523.10 366.89,516.80 367.24,510.50 367.59,504.21 367.93,497.93 368.28,491.67 368.63,485.41 368.98,479.18 369.33,472.96 369.68,466.75 370.02,460.57 370.37,454.41 370.72,448.27 371.07,442.16 371.42,436.07 371.76,430.01 372.11,423.98 372.46,417.98 372.81,412.01 373.16,406.07 373.51,400.17 373.85,394.31 374.20,388.48 374.55,382.69 374.90,376.94 375.25,371.24 375.60,365.57 375.94,359.96 376.29,354.38 376.64,348.86 376.99,343.38 377.34,337.96 377.68,332.59 378.03,327.27 378.38,322.00 378.73,316.79 379.08,311.63 379.43,306.54 379.77,301.50 380.12,296.52 380.47,291.61 380.82,286.76 381.17,281.97 381.51,277.25 381.86,272.59 382.21,268.00 382.56,263.48 382.91,259.03 383.26,254.65 383.60,250.35 383.95,246.11 384.30,241.95 384.65,237.87 385.00,233.86 385.34,229.93 385.69,226.08 386.04,222.30 386.39,218.61 386.74,214.99 387.09,211.46 387.43,208.02 387.78,204.65 388.13,201.37 388.48,198.17 388.83,195.06 389.18,192.04 389.52,189.11 389.87,186.26 390.22,183.50 390.57,180.83 390.92,178.25 391.26,175.76 391.61,173.37 391.96,171.06 392.31,168.85 392.66,166.73 393.01,164.71 393.35,162.78 393.70,160.94 394.05,159.20 394.40,157.56 394.75,156.01 395.09,154.55 395.44,153.20 395.79,151.94 396.14,150.77 396.49,149.71 396.84,148.74 397.18,147.87 397.53,147.10 397.88,146.43 398.23,145.86 398.58,145.38 398.92,145.01 399.27,144.73 399.62,144.55 399.97,144.47 400.32,144.47 400.67,144.54 401.01,144.60 401.36,144.56 401.71,144.25 402.06,143.48 402.41,142.09 402.76,140.02 403.10,137.32 403.45,134.15 403.80,130.70 404.15,127.11 404.50,123.50 404.84,119.92 405.19,116.38 405.54,112.91 405.89,109.49 406.24,106.15 406.59,102.87 406.93,99.66 407.28,96.52 407.63,93.44 407.98,90.44 408.33,87.50 408.67,84.64 409.02,81.84 409.37,79.12 409.72,76.48 410.07,73.90 410.42,71.41 410.76,68.98 411.11,66.63 411.46,64.36 411.81,62.17 412.16,60.05 412.51,58.01 412.85,56.05 413.20,54.16 413.55,52.36 413.90,50.63 414.25,48.99 414.59,47.43 414.94,45.94 415.29,44.54 415.64,43.22 415.99,41.98 416.34,40.83 416.68,39.75 417.03,38.76 417.38,37.85 417.73,37.03 418.08,36.29 418.42,35.63 418.77,35.06 419.12,34.57 419.47,34.16 419.82,33.84 420.17,33.60 420.51,33.45 420.86,33.38 421.21,33.40 421.56,33.50 421.91,33.68 422.25,33.95 422.60,34.30 422.95,34.74 423.30,35.27 423.65,35.89 424.00,36.65 424.34,37.62 424.69,38.90 425.04,40.67 425.39,43.10 425.74,46.34 426.09,50.38 426.43,55.14 426.78,60.44 427.13,66.08 427.48,71.92 427.83,77.86 428.17,83.86 428.52,89.90 428.87,95.98 429.22,102.07 429.57,108.20 429.92,114.35 430.26,120.52 430.61,126.71 430.96,132.92 431.31,139.15 431.66,145.39 432.00,151.65 432.35,157.92 432.70,164.20 433.05,170.49 433.40,176.80 433.75,183.10 434.09,189.42 434.44,195.73 434.79,202.05 435.14,208.37 435.49,214.69 435.83,221.01 436.18,227.32 436.53,233.63 436.88,239.93 437.23,246.22 437.58,252.50 437.92,258.77 438.27,265.03 438.62,271.27 438.97,277.49 439.32,283.70 439.67,289.89 440.01,296.05 440.36,302.20 440.71,308.31 441.06,314.41 441.41,320.48 441.75,326.51 442.10,332.52 442.45,338.50 442.80,344.44 443.15,350.35 443.50,356.23 443.84,362.06 444.19,367.86 444.54,373.62 444.89,379.34 445.24,385.01 445.58,390.64 445.93,396.22 446.28,401.76 446.63,407.24 446.98,412.68 447.33,418.07 447.67,423.40 448.02,428.68 448.37,433.91 448.72,439.07 449.07,444.18 449.41,449.24 449.76,454.23 450.11,459.16 450.46,464.02 450.81,468.83 451.16,473.57 451.50,478.24 451.85,482.84 452.20,487.38 452.55,491.85 452.90,496.24 453.25,500.57 453.59,504.82 453.94,508.99 454.29,513.10 454.64,517.12 454.99,521.07 455.33,524.95 455.68,528.74 456.03,532.45 456.38,536.08 456.73,539.64 457.08,543.10 457.42,546.49 457.77,549.79 458.12,553.01 458.47,556.14 458.82,559.18 459.16,562.14 459.51,565.01 459.86,567.79 460.21,570.48 460.56,573.08 460.91,575.59 461.25,578.00 461.60,580.33 461.95,582.57 462.30,584.71 462.65,586.75 462.99,588.71 463.34,590.57 463.69,592.33 464.04,594.00 464.39,595.57 464.74,597.05 465.08,598.43 465.43,599.71 465.78,600.90 466.13,601.98 466.48,602.97 466.83,603.87 467.17,604.66 467.52,605.36 467.87,605.95 468.22,606.45 468.57,606.85 468.91,607.15 469.26,607.35 469.61,607.46 469.96,607.47 470.31,607.42 470.66,607.35 471.00,607.35 471.35,607.58 471.70,608.22 472.05,609.45 472.40,611.36 472.74,613.92 473.09,616.99 473.44,620.39 473.79,623.96 474.14,627.57 474.49,631.17 474.83,634.72 475.18,638.21 475.53,641.63 475.88,644.99 476.23,648.29 476.58,651.52 476.92,654.68 477.27,657.77 477.62,660.79 477.97,663.74 478.32,666.62 478.66,669.43 479.01,672.17 479.36,674.83 479.71,677.42 480.06,679.94 480.41,682.38 480.75,684.75 481.10,687.04 481.45,689.25 481.80,691.39 482.15,693.45 482.49,695.43 482.84,697.33 483.19,699.15 483.54,700.90 483.89,702.56 484.24,704.15 484.58,705.65 484.93,707.07 485.28,708.41 485.63,709.67 485.98,710.84 486.32,711.94 486.67,712.95 487.02,713.87 487.37,714.72 487.72,715.48 488.07,716.16 488.41,716.75 488.76,717.26 489.11,717.69 489.46,718.03 489.81,718.29 490.16,718.46 490.50,718.55 490.85,718.56 491.20,718.48 491.55,718.31 491.90,718.06 492.24,717.73 492.59,717.31 492.94,716.81 493.29,716.21 493.64,715.48 493.99,714.58 494.33,713.39 494.68,711.75 495.03,709.49 495.38,706.46 495.73,702.60 496.07,698.00 496.42,692.81 496.77,687.24 497.12,681.44 497.47,675.51 497.82,669.52 498.16,663.49 498.51,657.43 498.86,651.33 499.21,645.22 499.56,639.07 499.90,632.91 500.25,626.72 500.60,620.52 500.95,614.29 501.30,608.05 501.65,601.80 501.99,595.53 502.34,589.25 502.69,582.96 503.04,576.66 503.39,570.35 503.74,564.04 504.08,557.72 504.43,551.40 504.78,545.08 505.13,538.77 505.48,532.45 505.82,526.13 506.17,519.83 506.52,513.52 506.87,507.23 507.22,500.95 507.57,494.68 507.91,488.42 508.26,482.17 508.61,475.94 508.96,469.73 509.31,463.54 509.65,457.37 510.00,451.22 510.35,445.09 510.70,438.99 511.05,432.92 511.40,426.87 511.74,420.86 512.09,414.87 512.44,408.92 512.79,403.00 513.14,397.12 513.48,391.27 513.83,385.47 514.18,379.70 514.53,373.97 514.88,368.29 515.23,362.65 515.57,357.06 515.92,351.51 516.27,346.01 516.62,340.56 516.97,335.16 517.32,329.82 517.66,324.52 518.01,319.28 518.36,314.10 518.71,308.98 519.06,303.91 519.40,298.91 519.75,293.96 520.10,289.08 520.45,284.26 520.80,279.51 521.15,274.82 521.49,270.20 521.84,265.64 522.19,261.16 522.54,256.75 522.89,252.41 523.23,248.14 523.58,243.94 523.93,239.82 524.28,235.78 524.63,231.81 524.98,227.92 525.32,224.11 525.67,220.37 526.02,216.72 526.37,213.15 526.72,209.66 527.07,206.26 527.41,202.94 527.76,199.70 528.11,196.55 528.46,193.48 528.81,190.51 529.15,187.62 529.50,184.81 529.85,182.10 530.20,179.48 530.55,176.95 530.90,174.51 531.24,172.16 531.59,169.90 531.94,167.74 532.29,165.67 532.64,163.69 532.98,161.81 533.33,160.03 533.68,158.33 534.03,156.74 534.38,155.24 534.73,153.84 535.07,152.53 535.42,151.32 535.77,150.21 536.12,149.20 536.47,148.28 536.81,147.46 537.16,146.74 537.51,146.12 537.86,145.60 538.21,145.18 538.56,144.85 538.90,144.63 539.25,144.50 539.60,144.46 539.95,144.50 540.30,144.58 540.65,144.61 540.99,144.45 541.34,143.92 541.69,142.85 542.04,141.10 542.39,138.69 542.73,135.72 543.08,132.39 543.43,128.85 543.78,125.24 544.13,121.63 544.48,118.07 544.82,114.57 545.17,111.13 545.52,107.75 545.87,104.44 546.22,101.19 546.56,98.02 546.91,94.91 547.26,91.87 547.61,88.90 547.96,86.00 548.31,83.18 548.65,80.42 549.00,77.74 549.35,75.13 549.70,72.60 550.05,70.14 550.39,67.75 550.74,65.44 551.09,63.21 551.44,61.06 551.79,58.98 552.14,56.98 552.48,55.06 552.83,53.22 553.18,51.45 553.53,49.77 553.88,48.17 554.23,46.65 554.57,45.21 554.92,43.85 555.27,42.57 555.62,41.37 555.97,40.26 556.31,39.23 556.66,38.28 557.01,37.42 557.36,36.63 557.71,35.94 558.06,35.32 558.40,34.79 558.75,34.35 559.10,33.98 559.45,33.71 559.80,33.51 560.14,33.40 560.49,33.38 560.84,33.44 561.19,33.58 561.54,33.81 561.89,34.12 562.23,34.52 562.58,35.00 562.93,35.58 563.28,36.27 563.63,37.12 563.97,38.23 564.32,39.74 564.67,41.84 565.02,44.68 565.37,48.34 565.72,52.78 566.06,57.84 566.41,63.34 566.76,69.09 567.11,74.99 567.46,80.97 567.81,87.00 568.15,93.05 568.50,99.14 568.85,105.25 569.20,111.39 569.55,117.55 569.89,123.73 570.24,129.93 570.59,136.15 570.94,142.39 571.29,148.64 571.64,154.90 571.98,161.18 572.33,167.47 572.68,173.77 573.03,180.07 573.38,186.38 573.72,192.70 574.07,199.02 574.42,205.34 574.77,211.66 575.12,217.97 575.47,224.29 575.81,230.60 576.16,236.90 576.51,243.20 576.86,249.48 577.21,255.76 577.55,262.02 577.90,268.27 578.25,274.50 578.60,280.72 578.95,286.91 579.30,293.09 579.64,299.25 579.99,305.38 580.34,311.48 580.69,317.56 581.04,323.62 581.39,329.64 581.73,335.63 582.08,341.59 582.43,347.52 582.78,353.41 583.13,359.26 583.47,365.08 583.82,370.86 584.17,376.59 584.52,382.29 584.87,387.94 585.22,393.54 585.56,399.10 585.91,404.61 586.26,410.07 586.61,415.49 586.96,420.84 587.30,426.15 587.65,431.40 588.00,436.60 588.35,441.74 588.70,446.82 589.05,451.84 589.39,456.80 589.74,461.69 590.09,466.53 590.44,471.30 590.79,476.00 591.14,480.64 591.48,485.21 591.83,489.71 592.18,494.14 592.53,498.50 592.88,502.78 593.22,507.00 593.57,511.14 593.92,515.20 594.27,519.19 594.62,523.09 594.97,526.93 595.31,530.68 595.66,534.35 596.01,537.94 596.36,541.45 596.71,544.87 597.05,548.21 597.40,551.47 597.75,554.64 598.10,557.73 598.45,560.73 598.80,563.64 599.14,566.46 599.49,569.19 599.84,571.84 600.19,574.39 600.54,576.85 600.88,579.22 601.23,581.50 601.58,583.69 601.93,585.78 602.28,587.78 602.63,589.68 602.97,591.49 603.32,593.21 603.67,594.83 604.02,596.35 604.37,597.78 604.72,599.11 605.06,600.34 605.41,601.47 605.76,602.51 606.11,603.45 606.46,604.29 606.80,605.03 607.15,605.68 607.50,606.22 607.85,606.67 608.20,607.02 608.55,607.27 608.89,607.42 609.24,607.48 609.59,607.45 609.94,607.38 610.29,607.33 610.63,607.43 610.98,607.85 611.33,608.78 611.68,610.36 612.03,612.62 612.38,615.46 612.72,618.73 613.07,622.23 613.42,625.83 613.77,629.44 614.12,633.02 614.46,636.54 614.81,639.99 615.16,643.39 615.51,646.71 615.86,649.97 616.21,653.17 616.55,656.29 616.90,659.35 617.25,662.33 617.60,665.25 617.95,668.09 618.30,670.86 618.64,673.56 618.99,676.19 619.34,678.74 619.69,681.22 620.04,683.62 620.38,685.95 620.73,688.20 621.08,690.37 621.43,692.47 621.78,694.49 622.13,696.43 622.47,698.29 622.82,700.07 623.17,701.77 623.52,703.39 623.87,704.94 624.21,706.40 624.56,707.78 624.91,709.07 625.26,710.29 625.61,711.42 625.96,712.47 626.30,713.44 626.65,714.32 627.00,715.13 627.35,715.84 627.70,716.48 628.04,717.03 628.39,717.49 628.74,717.88 629.09,718.17 629.44,718.39 629.79,718.52 630.13,718.56 630.48,718.52 630.83,718.40 631.18,718.19 631.53,717.90 631.88,717.53 632.22,717.06 632.57,716.51 632.92,715.85 633.27,715.04 633.62,714.00 633.96,712.61 634.31,710.67 634.66,708.02 635.01,704.55 635.36,700.29 635.71,695.36 636.05,689.95 636.40,684.25 636.75,678.37 637.10,672.41 637.45,666.39 637.79,660.34 638.14,654.26 638.49,648.16 638.84,642.03 639.19,635.87 639.54,629.70 639.88,623.50 640.23,617.29 640.58,611.05 640.93,604.81 641.28,598.54 641.63,592.27 641.97,585.98 642.32,579.69 642.67,573.38 643.02,567.07 643.37,560.76 643.71,554.44 644.06,548.12 644.41,541.80 644.76,535.48 645.11,529.17 645.46,522.86 645.80,516.55 646.15,510.25 646.50,503.97 646.85,497.69 647.20,491.42 647.54,485.17 647.89,478.93 648.24,472.71 648.59,466.51 648.94,460.33 649.29,454.17 649.63,448.03 649.98,441.92 650.33,435.83 650.68,429.78 651.03,423.74 651.37,417.75 651.72,411.78 652.07,405.84 652.42,399.94 652.77,394.08 653.12,388.25 653.46,382.47 653.81,376.72 654.16,371.02 654.51,365.35 654.86,359.74 655.21,354.17 655.55,348.65 655.90,343.17 656.25,337.75 656.60,332.38 656.95,327.06 657.29,321.80 657.64,316.59 657.99,311.43 658.34,306.34 658.69,301.31 659.04,296.33 659.38,291.42 659.73,286.57 660.08,281.78 660.43,277.06 660.78,272.41 661.12,267.82 661.47,263.31 661.82,258.86 662.17,254.48 662.52,250.18 662.87,245.95 663.21,241.79 663.56,237.71 663.91,233.71 664.26,229.78 664.61,225.93 664.95,222.16 665.30,218.47 665.65,214.86 666.00,211.33 666.35,207.88 666.70,204.52 667.04,201.24 667.39,198.05 667.74,194.95 668.09,191.93 668.44,188.99 668.79,186.15 669.13,183.39 669.48,180.73 669.83,178.15 670.18,175.67 670.53,173.28 670.87,170.98 671.22,168.77 671.57,166.65 671.92,164.63 672.27,162.70 672.62,160.87 672.96,159.13 673.31,157.49 673.66,155.95 674.01,154.50 674.36,153.15 674.70,151.89 675.05,150.73 675.40,149.67 675.75,148.71 676.10,147.84 676.45,147.08 676.79,146.41 677.14,145.84 677.49,145.37 677.84,145.00 678.19,144.72 678.53,144.55 678.88,144.47 679.23,144.48 679.58,144.54 679.93,144.61 680.28,144.56 680.62,144.23 680.97,143.44 681.32,142.02 681.67,139.92 682.02,137.21 682.37,134.02 682.71,130.56 683.06,126.97 683.41,123.36 683.76,119.78 684.11,116.24 684.45,112.77 684.80,109.36 685.15,106.02 685.50,102.74 685.85,99.54 686.20,96.39 686.54,93.32 686.89,90.32 687.24,87.39 687.59,84.53 687.94,81.74 688.28,79.02 688.63,76.38 688.98,73.81 689.33,71.31 689.68,68.89 690.03,66.54 690.37,64.28 690.72,62.08 691.07,59.97 691.42,57.93 691.77,55.97 692.11,54.09 692.46,52.29 692.81,50.57 693.16,48.93 693.51,47.37 693.86,45.89 694.20,44.49 694.55,43.17 694.90,41.94 695.25,40.78 695.60,39.71 695.95,38.73 696.29,37.82 696.64,37.00 696.99,36.26 697.34,35.61 697.69,35.04 698.03,34.55 698.38,34.15 698.73,33.83 699.08,33.60 699.43,33.45 699.78,33.38 700.12,33.40 700.47,33.50 700.82,33.69 701.17,33.96 701.52,34.32 701.86,34.76 702.21,35.29 702.56,35.92 702.91,36.69 703.26,37.66 703.61,38.96 703.95,40.75 704.30,43.22 704.65,46.48 705.00,50.56 705.35,55.34 705.70,60.65 706.04,66.30 706.39,72.15 706.74,78.09 707.09,84.10 707.44,90.14 707.78,96.21 708.13,102.31 708.48,108.44 708.83,114.59 709.18,120.76 709.53,126.95 709.87,133.16 710.22,139.39 710.57,145.63 710.92,151.89 711.27,158.16 711.61,164.45 711.96,170.74 712.31,177.04 712.66,183.35 713.01,189.66 713.36,195.98 713.70,202.30 714.05,208.62 714.40,214.94 714.75,221.25 715.10,227.57 715.44,233.87 715.79,240.17 716.14,246.46 716.49,252.74 716.84,259.01 717.19,265.27 717.53,271.51 717.88,277.73 718.23,283.94 718.58,290.13 718.93,296.29 719.28,302.43 719.62,308.55 719.97,314.65 720.32,320.71 720.67,326.75 721.02,332.76 721.36,338.73 721.71,344.67 722.06,350.58 722.41,356.46 722.76,362.29 723.11,368.09 723.45,373.84 723.80,379.56 724.15,385.23 724.50,390.86 724.85,396.44 725.19,401.97 725.54,407.46 725.89,412.89 726.24,418.28 726.59,423.61 726.94,428.88 727.28,434.11 727.63,439.27 727.98,444.38 728.33,449.43 728.68,454.42 729.02,459.35 729.37,464.21 729.72,469.01 730.07,473.75 730.42,478.42 730.77,483.02 731.11,487.55 731.46,492.02 731.81,496.41 732.16,500.73 732.51,504.98 732.86,509.16 733.20,513.26 733.55,517.28 733.90,521.23 734.25,525.09 734.60,528.88 734.94,532.59 735.29,536.22 735.64,539.77 735.99,543.24 736.34,546.62 736.69,549.92 737.03,553.13 737.38,556.26 737.73,559.30 738.08,562.25 738.43,565.12 738.77,567.89 739.12,570.58 739.47,573.18 739.82,575.68 740.17,578.10 740.52,580.42 740.86,582.65 741.21,584.79 741.56,586.83 741.91,588.78 742.26,590.64 742.60,592.40 742.95,594.06 743.30,595.63 743.65,597.10 744.00,598.48 744.35,599.76 744.69,600.94 745.04,602.02 745.39,603.01 745.74,603.90 746.09,604.69 746.44,605.38 746.78,605.97 747.13,606.47 747.48,606.86 747.83,607.16 748.18,607.36 748.52,607.46 748.87,607.47 749.22,607.42 749.57,607.35 749.92,607.35 750.27,607.59 750.61,608.26 750.96,609.51 751.31,611.45 751.66,614.03 752.01,617.12 752.35,620.53 752.70,624.10 753.05,627.71 753.40,631.31 753.75,634.85 754.10,638.34 754.44,641.76 754.79,645.12 755.14,648.41 755.49,651.64 755.84,654.80 756.18,657.89 756.53,660.90 756.88,663.85 757.23,666.73 757.58,669.54 757.93,672.27 758.27,674.93 758.62,677.52 758.97,680.04 759.32,682.48 759.67,684.84 760.02,687.13 760.36,689.34 760.71,691.47 761.06,693.53 761.41,695.50 761.76,697.40 762.10,699.22 762.45,700.96 762.80,702.62 763.15,704.21 763.50,705.70 763.85,707.12 764.19,708.46 764.54,709.71 764.89,710.89 765.24,711.98 765.59,712.98 765.93,713.91 766.28,714.75 766.63,715.51 766.98,716.18 767.33,716.77 767.68,717.28 768.02,717.70 768.37,718.04 768.72,718.30 769.07,718.47 769.42,718.55 769.77,718.55 770.11,718.47 770.46,718.30 770.81,718.05 771.16,717.72 771.51,717.30 771.85,716.79 772.20,716.18 772.55,715.45 772.90,714.54 773.25,713.33 773.60,711.68 773.94,709.39 774.29,706.32 774.64,702.43 774.99,697.80 775.34,692.60 775.68,687.02 776.03,681.21 776.38,675.28 776.73,669.29 777.08,663.26 777.43,657.19 777.77,651.10 778.12,644.98 778.47,638.83 778.82,632.67 779.17,626.48 779.51,620.27 779.86,614.05 780.21,607.81 780.56,601.55 780.91,595.29 781.26,589.00 781.60,582.71 781.95,576.41 782.30,570.11 782.65,563.79 783.00,557.48 783.35,551.16 783.69,544.84 784.04,538.52 784.39,532.20 784.74,525.89 785.09,519.58 785.43,513.28 785.78,506.99 786.13,500.70 786.48,494.43 786.83,488.17 787.18,481.93 787.52,475.70 787.87,469.49 788.22,463.30 788.57,457.13 788.92,450.98 789.26,444.86 789.61,438.76 789.96,432.68 790.31,426.64 790.66,420.62 791.01,414.64 791.35,408.69 791.70,402.77 792.05,396.89 792.40,391.05 792.75,385.24 793.09,379.48 793.44,373.75 793.79,368.07 794.14,362.43 794.49,356.84 794.84,351.29 795.18,345.80 795.53,340.35 795.88,334.95 796.23,329.61 796.58,324.32 796.93,319.08 797.27,313.90 797.62,308.78 797.97,303.72 798.32,298.71 798.67,293.77 799.01,288.89 799.36,284.08 799.71,279.32 800.06,274.64 800.41,270.02 800.76,265.47 801.10,260.99 801.45,256.58 801.80,252.24 802.15,247.97 802.50,243.78 802.84,239.66 803.19,235.62 803.54,231.66 803.89,227.77 804.24,223.96 804.59,220.23 804.93,216.58 805.28,213.01 805.63,209.53 805.98,206.13 806.33,202.81 806.67,199.57 807.02,196.43 807.37,193.37 807.72,190.39 808.07,187.51 808.42,184.71 808.76,182.00 809.11,179.38 809.46,176.85 809.81,174.42 810.16,172.07 810.51,169.82 810.85,167.66 811.20,165.59 811.55,163.62 811.90,161.74 812.25,159.96 812.59,158.27 812.94,156.68 813.29,155.18 813.64,153.78 813.99,152.48 814.34,151.28 814.68,150.17 815.03,149.16 815.38,148.25 815.73,147.43 816.08,146.72 816.42,146.10 816.77,145.58 817.12,145.16 817.47,144.84 817.82,144.62 818.17,144.50 818.51,144.46 818.86,144.51 819.21,144.58 819.56,144.60 819.91,144.44 820.26,143.89 820.60,142.79 820.95,141.02 821.30,138.58 821.65,135.60 822.00,132.25 822.34,128.71 822.69,125.10 823.04,121.49 823.39,117.93 823.74,114.43 824.09,110.99 824.43,107.62 824.78,104.31 825.13,101.07 825.48,97.90 825.83,94.79 826.17,91.75 826.52,88.79 826.87,85.89 827.22,83.07 827.57,80.32 827.92,77.64 828.26,75.03 828.61,72.50 828.96,70.04 829.31,67.66 829.66,65.36 830.00,63.13 830.35,60.97 830.70,58.90 831.05,56.90 831.40,54.99 831.75,53.15 832.09,51.39 832.44,49.71 832.79,48.11 833.14,46.59 833.49,45.15 833.84,43.79 834.18,42.52 834.53,41.33 834.88,40.22 835.23,39.19 835.58,38.25 835.92,37.38 836.27,36.61 836.62,35.91 836.97,35.30 837.32,34.77 837.67,34.33 838.01,33.97 838.36,33.70 838.71,33.51 839.06,33.40 839.41,33.38 839.75,33.44 840.10,33.59 840.45,33.82 840.80,34.13 841.15,34.53 841.50,35.02 841.84,35.60 842.19,36.30 842.54,37.16 842.89,38.28 843.24,39.81 843.58,41.93 843.93,44.81 844.28,48.50 844.63,52.96 844.98,58.05 845.33,63.56 845.67,69.32 846.02,75.23 846.37,81.21 846.72,87.23 847.07,93.29 847.42,99.38 847.76,105.49 848.11,111.63 848.46,117.79 848.81,123.97 849.16,130.17 849.50,136.39 849.85,142.63 850.20,148.88 850.55,155.15 850.90,161.42 851.25,167.71 851.59,174.01 851.94,180.32 852.29,186.63 852.64,192.94 852.99,199.26 853.33,205.58 853.68,211.90 854.03,218.22 854.38,224.53 854.73,230.84 855.08,237.15 855.42,243.44 855.77,249.73 856.12,256.00 856.47,262.26 856.82,268.51 857.16,274.74 857.51,280.96 857.86,287.15 858.21,293.33 858.56,299.48 858.91,305.61 859.25,311.72 859.60,317.80 859.95,323.85 860.30,329.87 860.65,335.86 861.00,341.82 861.34,347.75 861.69,353.64 862.04,359.49 862.39,365.31 862.74,371.08 863.08,376.82 863.43,382.51 863.78,388.16 864.13,393.76 864.48,399.32 864.83,404.83 865.17,410.29 865.52,415.69 865.87,421.05 866.22,426.36 866.57,431.60 866.91,436.80 867.26,441.93 867.61,447.01 867.96,452.03 868.31,456.99 868.66,461.88 869.00,466.71 869.35,471.48 869.70,476.18 870.05,480.82 870.40,485.38 870.74,489.88 871.09,494.31 871.44,498.66 871.79,502.95 872.14,507.16 872.49,511.29 872.83,515.35 873.18,519.34 873.53,523.24 873.88,527.07 874.23,530.82 874.58,534.49 874.92,538.08 875.27,541.58 875.62,545.00 875.97,548.34 876.32,551.60 876.66,554.76 877.01,557.85 877.36,560.84 877.71,563.75 878.06,566.57 878.41,569.30 878.75,571.94 879.10,574.49 879.45,576.95 879.80,579.31 880.15,581.59 880.49,583.77 880.84,585.86 881.19,587.86 881.54,589.76 881.89,591.56 882.24,593.27 882.58,594.89 882.93,596.41 883.28,597.83 883.63,599.16 883.98,600.38 884.33,601.52 884.67,602.55 885.02,603.48 885.37,604.32 885.72,605.06 886.07,605.70 886.41,606.24 886.76,606.69 887.11,607.03 887.46,607.27 887.81,607.42 888.16,607.48 888.50,607.45 888.85,607.38 889.20,607.33 889.55,607.44 889.90,607.87 890.24,608.83 890.59,610.43 890.94,612.72 891.29,615.58 891.64,618.86 891.99,622.37 892.33,625.97 892.68,629.58 893.03,633.15 893.38,636.67 893.73,640.13 894.07,643.52 894.42,646.84 894.77,650.10 895.12,653.29 895.47,656.41 895.82,659.46 896.16,662.45 896.51,665.36 896.86,668.20 897.21,670.97 897.56,673.66 897.91,676.29 898.25,678.84 898.60,681.31 898.95,683.71 899.30,686.04 899.65,688.28 899.99,690.45 900.34,692.55 900.69,694.56 901.04,696.50 901.39,698.36 901.74,700.14 902.08,701.84 902.43,703.46 902.78,704.99 903.13,706.45 903.48,707.83 903.82,709.12 904.17,710.33 904.52,711.46 904.87,712.51 905.22,713.48 905.57,714.36 905.91,715.15 906.26,715.87 906.61,716.50 906.96,717.05 907.31,717.51 907.65,717.89 908.00,718.18 908.35,718.40 908.70,718.52 909.05,718.56 909.40,718.52 909.74,718.39 910.09,718.18 910.44,717.89 910.79,717.51 911.14,717.04 911.49,716.49 911.83,715.82 912.18,715.01 912.53,713.96 912.88,712.54 913.23,710.58 913.57,707.90 913.92,704.40 914.27,700.11 914.62,695.16 914.97,689.74 915.32,684.02 915.66,678.14 916.01,672.18 916.36,666.16 916.71,660.11 917.06,654.03 917.40,647.92 917.75,641.79 918.10,635.63 918.45,629.46 918.80,623.26 919.15,617.04 919.49,610.81 919.84,604.56 920.19,598.30 920.54,592.02 920.89,585.74 921.23,579.44 921.58,573.14 921.93,566.83 922.28,560.51 922.63,554.20 922.98,547.88 923.32,541.56 923.67,535.24 924.02,528.92 924.37,522.61 924.72,516.31 925.07,510.01 925.41,503.72 925.76,497.44 926.11,491.18 926.46,484.93 926.81,478.69 927.15,472.47 927.50,466.27 927.85,460.09 928.20,453.93 928.55,447.80 928.90,441.68 929.24,435.60 929.59,429.54 929.94,423.51 930.29,417.51 930.64,411.55 930.98,405.61 931.33,399.71 931.68,393.85 932.03,388.03 932.38,382.24 932.73,376.50 933.07,370.79 933.42,365.14 933.77,359.52 934.12,353.95 934.47,348.43 934.82,342.96 935.16,337.54 935.51,332.17 935.86,326.85 936.21,321.59 936.56,316.39 936.90,311.24 937.25,306.14 937.60,301.11 937.95,296.14 938.30,291.23 938.65,286.38 938.99,281.60 939.34,276.88 939.69,272.23 940.04,267.65 940.39,263.13 940.73,258.69 941.08,254.32 941.43,250.01 941.78,245.79 942.13,241.63 942.48,237.55 942.82,233.55 943.17,229.63 943.52,225.78 943.87,222.01 944.22,218.32 944.56,214.72 944.91,211.19 945.26,207.75 945.61,204.39 945.96,201.12 946.31,197.93 946.65,194.83 947.00,191.81 947.35,188.88 947.70,186.04 948.05,183.29 948.40,180.63 948.74,178.06 949.09,175.58 949.44,173.19 949.79,170.89 950.14,168.68 950.48,166.57 950.83,164.56 951.18,162.63 951.53,160.80 951.88,159.07 952.23,157.43 952.57,155.89 952.92,154.44 953.27,153.09 953.62,151.84 953.97,150.69 954.31,149.63 954.66,148.67 955.01,147.81 955.36,147.05 955.71,146.38 956.06,145.82 956.40,145.35 956.75,144.98 957.10,144.72 957.45,144.54 957.80,144.47 958.14,144.48 958.49,144.54 958.84,144.61 959.19,144.55 959.54,144.21 959.89,143.40 960.23,141.96 960.58,139.83 960.93,137.09 961.28,133.89 961.63,130.42 961.98,126.83 962.32,123.22 962.67,119.64 963.02,116.11 963.37,112.64 963.72,109.23 964.06,105.89 964.41,102.62 964.76,99.41 965.11,96.27 965.46,93.20 965.81,90.21 966.15,87.28 966.50,84.42 966.85,81.63 967.20,78.92 967.55,76.28 967.89,73.71 968.24,71.22 968.59,68.80 968.94,66.46 969.29,64.19 969.64,62.00 969.98,59.89 970.33,57.85 970.68,55.90 971.03,54.02 971.38,52.22 971.72,50.50 972.07,48.87 972.42,47.31 972.77,45.83 973.12,44.44 973.47,43.12 973.81,41.89 974.16,40.74 974.51,39.67 974.86,38.69 975.21,37.79 975.56,36.97 975.90,36.23 976.25,35.58 976.60,35.02 976.95,34.53 977.30,34.13 977.64,33.82 977.99,33.59 978.34,33.44 978.69,33.38 979.04,33.40 979.39,33.51 979.73,33.70 980.08,33.97 980.43,34.33 980.78,34.78 981.13,35.31 981.47,35.95 981.82,36.72 982.17,37.70 982.52,39.02 982.87,40.83 983.22,43.33 983.56,46.62 983.91,50.73 984.26,55.54 984.61,60.87 984.96,66.53 985.30,72.38 985.65,78.33 986.00,84.33 986.35,90.37 986.70,96.45 987.05,102.55 987.39,108.68 987.74,114.83 988.09,121.00 988.44,127.19 988.79,133.40 989.14,139.63 989.48,145.87 989.83,152.13 990.18,158.41 990.53,164.69 990.88,170.98 991.22,177.29 991.57,183.59 991.92,189.91 992.27,196.23 992.62,202.54 992.97,208.86 993.31,215.18 993.66,221.50 994.01,227.81 994.36,234.12 994.71,240.42 995.05,246.71 995.40,252.99 995.75,259.26 996.10,265.51 996.45,271.75 996.80,277.97 997.14,284.18 997.49,290.37 997.84,296.53 998.19,302.67 998.54,308.79 998.89,314.88 999.23,320.95 999.58,326.98 999.93,332.99 1000.28,338.96 1000.63,344.91 1000.97,350.81 1001.32,356.68 1001.67,362.52 1002.02,368.31 1002.37,374.07 1002.72,379.78 1003.06,385.45 1003.41,391.07 1003.76,396.65 1004.11,402.18 1004.46,407.67 1004.80,413.10 1005.15,418.48 1005.50,423.81 1005.85,429.09 1006.20,434.31 1006.55,439.47 1006.89,444.58 1007.24,449.63 1007.59,454.61 1007.94,459.54 1008.29,464.40 1008.63,469.20 1008.98,473.93 1009.33,478.60 1009.68,483.20 1010.03,487.73 1010.38,492.19 1010.72,496.58 1011.07,500.90 1011.42,505.14 1011.77,509.32 1012.12,513.41 1012.47,517.43 1012.81,521.38"/>
</g>
<text x="50" y="31" font-size="30.25" font-weight="bold" fill="#6633ff" textLength="108.4" lengthAdjust="spacingAndGlyphs" >FLAC3D</text>
<text x="165" y="31" font-size="30.25" font-weight="bold" fill="#6633ff" textLength="42.5" lengthAdjust="spacingAndGlyphs" >9.6</text>
<text x="49" y="49" font-size="9.5" fill="#6633ff" textLength="159.6" lengthAdjust="spacingAndGlyphs" >&#169;2025 Itasca Consulting Group, Inc.</text>
<text x="12" y="80" font-size="15" font-weight="bold" fill="#000" textLength="52.5" lengthAdjust="spacingAndGlyphs" >History</text>
<text x="72" y="97" font-size="13" fill="#000" textLength="20.4" lengthAdjust="spacingAndGlyphs" >Top</text>
<text x="71" y="113" font-size="13" fill="#000" textLength="41.5" lengthAdjust="spacingAndGlyphs" >Bottom</text>
<text x="24" y="129" font-size="13" fill="#000" textLength="45.4" lengthAdjust="spacingAndGlyphs" >vs. Time</text>
<text x="263" y="17" font-size="13" fill="#000" textLength="181.5" lengthAdjust="spacingAndGlyphs" >Slip induced by harmonic wave</text>
<text x="277" y="656.43" font-size="15.5" fill="#000" textLength="24.98" lengthAdjust="spacingAndGlyphs" >-8.0</text>
<text x="277" y="587.69" font-size="15.5" fill="#000" textLength="24.98" lengthAdjust="spacingAndGlyphs" >-6.0</text>
<text x="277" y="518.95" font-size="15.5" fill="#000" textLength="24.98" lengthAdjust="spacingAndGlyphs" >-4.0</text>
<text x="277" y="450.21" font-size="15.5" fill="#000" textLength="24.98" lengthAdjust="spacingAndGlyphs" >-2.0</text>
<text x="277" y="381.47" font-size="15.5" fill="#000" textLength="20.16" lengthAdjust="spacingAndGlyphs" >0.0</text>
<text x="277" y="312.73" font-size="15.5" fill="#000" textLength="20.16" lengthAdjust="spacingAndGlyphs" >2.0</text>
<text x="277" y="243.99" font-size="15.5" fill="#000" textLength="20.16" lengthAdjust="spacingAndGlyphs" >4.0</text>
<text x="277" y="175.25" font-size="15.5" fill="#000" textLength="20.16" lengthAdjust="spacingAndGlyphs" >6.0</text>
<text x="277" y="106.51" font-size="15.5" fill="#000" textLength="20.16" lengthAdjust="spacingAndGlyphs" >8.0</text>
<text x="385.5" y="741.5" font-size="15.5" fill="#000" text-anchor="middle" textLength="27.5" lengthAdjust="spacingAndGlyphs" >0.50</text>
<text x="454.5" y="741.5" font-size="15.5" fill="#000" text-anchor="middle" textLength="27.5" lengthAdjust="spacingAndGlyphs" >1.00</text>
<text x="524.5" y="741.5" font-size="15.5" fill="#000" text-anchor="middle" textLength="27.5" lengthAdjust="spacingAndGlyphs" >1.50</text>
<text x="594.5" y="741.5" font-size="15.5" fill="#000" text-anchor="middle" textLength="27.5" lengthAdjust="spacingAndGlyphs" >2.00</text>
<text x="663.5" y="741.5" font-size="15.5" fill="#000" text-anchor="middle" textLength="27.5" lengthAdjust="spacingAndGlyphs" >2.50</text>
<text x="733.5" y="741.5" font-size="15.5" fill="#000" text-anchor="middle" textLength="27.5" lengthAdjust="spacingAndGlyphs" >3.00</text>
<text x="803.5" y="741.5" font-size="15.5" fill="#000" text-anchor="middle" textLength="27.5" lengthAdjust="spacingAndGlyphs" >3.50</text>
<text x="873.5" y="741.5" font-size="15.5" fill="#000" text-anchor="middle" textLength="27.5" lengthAdjust="spacingAndGlyphs" >4.00</text>
<text x="942.5" y="741.5" font-size="15.5" fill="#000" text-anchor="middle" textLength="27.5" lengthAdjust="spacingAndGlyphs" >4.50</text>
<text x="647" y="761" font-size="15" font-weight="bold" fill="#000" textLength="35.5" lengthAdjust="spacingAndGlyphs" >Time</text>
<text x="0" y="0" font-size="15" font-weight="bold" fill="#000" text-anchor="middle" textLength="141.5" lengthAdjust="spacingAndGlyphs" transform="translate(272,377) rotate(-90)">Shear Stress &#215;10^-1</text>
</svg>
</body></html>
